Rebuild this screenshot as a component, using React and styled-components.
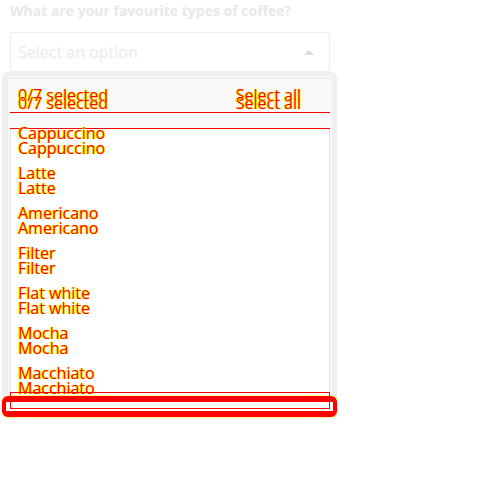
import styled, { createGlobalStyle } from "styled-components";

const coffees = [
  "Cappuccino",
  "Latte",
  "Americano",
  "Filter",
  "Flat white",
  "Mocha",
  "Macchiato",
];

const GlobalStyle = createGlobalStyle`
  body {
    margin: 0;
    background: #fff;
    font-family: "Open Sans", "Liberation Sans", sans-serif;
  }
`;

const Field = styled.div`
  position: relative;
  width: 320px;
  padding: 0 10px;
`;

const Label = styled.div`
  font-size: 14px;
  font-weight: 700;
  line-height: 22px;
  color: #e8e8e8;
  margin-bottom: 10px;
`;

const SelectBox = styled.div`
  box-sizing: border-box;
  height: 40px;
  border: 1px solid #ececec;
  border-radius: 2px;
  display: flex;
  align-items: center;
  justify-content: space-between;
  padding: 0 15px 0 7px;
`;

const Placeholder = styled.span`
  font-size: 16px;
  color: #e9e9e9;
`;

const Caret = styled.span`
  width: 0;
  height: 0;
  border-left: 5px solid transparent;
  border-right: 5px solid transparent;
  border-bottom: 5px solid #dcdcdc;
`;

const Panel = styled.div`
  position: absolute;
  top: 72px;
  left: 2px;
  width: 335px;
`;

const PanelBody = styled.div`
  background: #efefef;
  border-radius: 6px 6px 0 0;
  padding: 6px 7px 8px 8px;
`;

const InnerBox = styled.div`
  display: flex;
  flex-direction: column;
  background: #fff;
  border: 1px solid #e6e6e6;
  border-bottom: none;
  box-shadow: 0 0 0 2px #f7f7f7;
`;

const Header = styled.div`
  box-sizing: border-box;
  height: 34px;
  padding: 12px 29px 0 8px;
  background: #fafafa;
  border-bottom: 1px solid #f00;
  display: flex;
  justify-content: space-between;
  margin: 0 -1px;
`;

const Stripe = styled.div`
  box-sizing: border-box;
  height: 16px;
  background: #fafafa;
  border-bottom: 1px solid #f00;
  margin: 0 -1px;
`;

const Stack = styled.div`
  display: flex;
  flex-direction: column;
  gap: ${(p) => p.$gap}px;
`;

const List = styled.div`
  display: flex;
  flex-direction: column;
  gap: 17px;
  padding-left: 7px;
`;

const Copy = styled.span`
  display: block;
  font-size: 16px;
  line-height: 8px;
  color: #f00;
  white-space: nowrap;
  text-shadow: 1px 0 #ff0, -1px 0 #ff0;
`;

const Footer = styled.div`
  position: relative;
  z-index: 2;
  box-sizing: border-box;
  height: 17px;
  border: 1px solid #f00;
  margin: 0 -1px;
`;

const Frame = styled.div`
  position: absolute;
  z-index: 1;
  left: 0;
  right: 0;
  bottom: 0;
  height: 21px;
  box-sizing: border-box;
  background: #fff;
  border: solid #f00;
  border-width: 6px 4px 6px 4px;
  border-radius: 6px;
  box-shadow: 0 0 0 0.5px #ff0;
`;

const Doubled = ({ text, gap }) => (
  <Stack $gap={gap}>
    <Copy>{text}</Copy>
    <Copy>{text}</Copy>
  </Stack>
);

export default function App() {
  return (
    <>
      <GlobalStyle />
      <Field>
        <Label>What are your favourite types of coffee?</Label>
        <SelectBox>
          <Placeholder>Select an option</Placeholder>
          <Caret />
        </SelectBox>
      </Field>
      <Panel>
        <PanelBody>
          <InnerBox>
            <Header>
              <Doubled text="0/7 selected" gap={0} />
              <Doubled text="Select all" gap={0} />
            </Header>
            <Stripe />
            <List>
              {coffees.map((c) => (
                <Doubled key={c} text={c} gap={7} />
              ))}
            </List>
            <Footer />
          </InnerBox>
        </PanelBody>
        <Frame />
      </Panel>
    </>
  );
}
